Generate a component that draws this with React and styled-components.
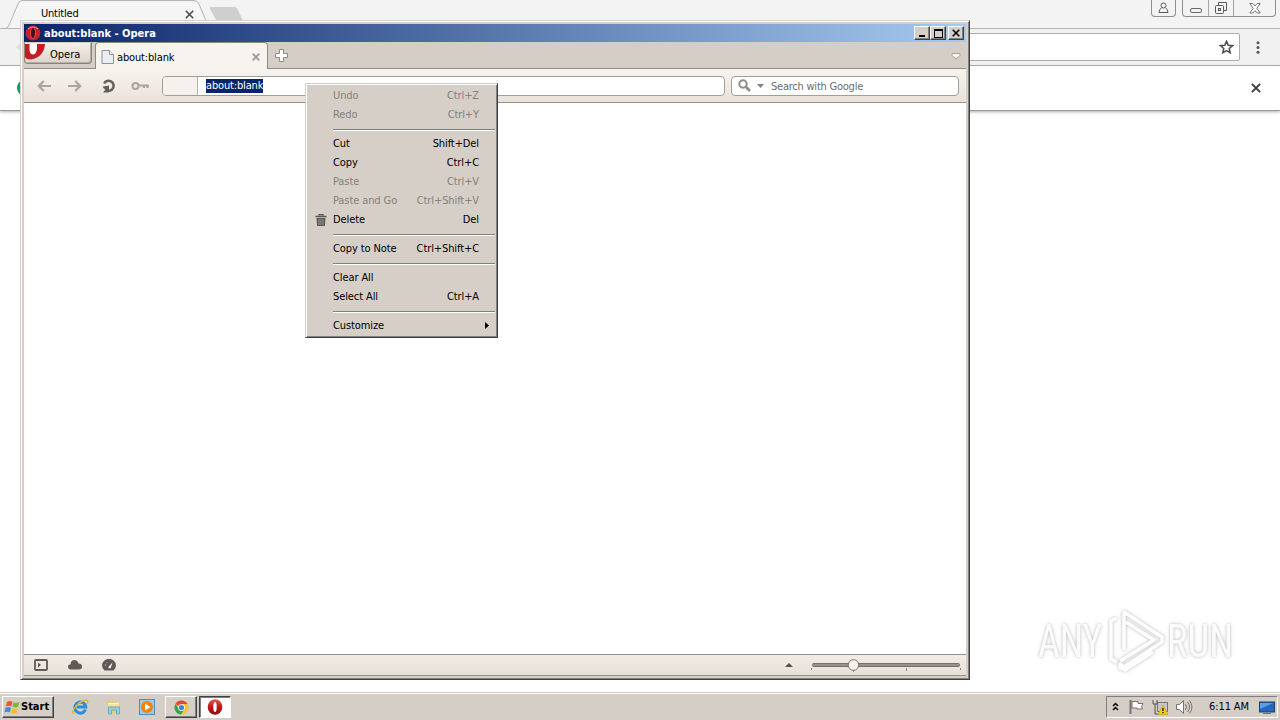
import React from 'react';
import styled, { createGlobalStyle, css } from 'styled-components';

const GlobalStyle = createGlobalStyle`
  * {
    box-sizing: border-box;
  }

  body {
    margin: 0;
    overflow: hidden;
    font-family: 'DejaVu Sans Condensed', 'DejaVu Sans', sans-serif;
    font-stretch: condensed;
    font-size: 11px;
    line-height: 14px;
    color: #000;
  }

  svg {
    display: block;
    flex: none;
  }
`;

const Desktop = styled.div`
  position: relative;
  width: 1280px;
  height: 720px;
  display: flex;
  flex-direction: column;
  overflow: hidden;
  background: #fff;
`;

// Chrome window behind
const ChromeWindow = styled.section`
  flex: 1;
  display: flex;
  flex-direction: column;
  background: #fff;
`;

const ChromeTabStrip = styled.div`
  height: 28px;
  display: flex;
  justify-content: space-between;
  background: #f3f3f3;
`;

const ChromeTabs = styled.div`
  display: grid;
  width: 250px;
  height: 28px;

  > * {
    grid-area: 1 / 1;
  }
`;

const ChromeTabLabel = styled.div`
  display: flex;
  align-items: flex-start;
  justify-content: space-between;
  width: 153px;
  margin: 7px 0 0 41px;
  letter-spacing: -0.2px;

  svg {
    margin-top: 3px;
  }
`;

const ChromeControls = styled.div`
  display: flex;
  gap: 6px;
  padding-right: 4px;
`;

const ChromeControlGroup = styled.div`
  display: flex;
  height: 17px;
  border: 1px solid #8e8e8e;
  border-top: 0;
  border-radius: 0 0 4px 4px;
`;

const ChromeControl = styled.div`
  width: ${props => props.$width}px;
  display: flex;
  justify-content: center;
  align-items: center;

  & + & {
    border-left: 1px solid #a5a5a5;
  }
`;

const ChromeToolbar = styled.div`
  height: 38px;
  display: flex;
  align-items: center;
  border-top: 1px solid #b4b4b4;
  border-bottom: 1px solid #b4b4b4;
  background: #f1f1f1;
`;

const ChromeBack = styled.div`
  width: 80px;
  padding-left: 14px;
`;

const ChromeAddress = styled.div`
  flex: 1;
  height: 28px;
  display: flex;
  align-items: center;
  justify-content: flex-end;
  padding-right: 5px;
  border: 1px solid #adadad;
  border-radius: 2px;
  background: #fff;
`;

const ChromeMenuButton = styled.div`
  width: 40px;
  display: flex;
  justify-content: center;
  padding-right: 4px;
`;

const ChromeInfoBar = styled.div`
  height: 45px;
  display: flex;
  align-items: center;
  justify-content: space-between;
  padding: 0 19px 0 17px;
  border-bottom: 1px solid #999;
  background: #fff;
  box-shadow: 0 1px 3px rgba(0, 0, 0, 0.32);
`;

const GreenDot = styled.div`
  width: 16px;
  height: 16px;
  border-radius: 50%;
  background: #109d62;
`;

// Opera window
const OperaWindow = styled.main`
  position: absolute;
  left: 20px;
  top: 20px;
  width: 950px;
  height: 660px;
  display: flex;
  flex-direction: column;
  padding: 2px 3px 2px 2px;
  border: 1px solid #d8d2ca;
  border-right-color: #404040;
  border-bottom-color: #404040;
  background: #d5cfc7;
  box-shadow: inset 1px 1px #fff, inset -1px -1px #808080;
`;

const TitleBar = styled.header`
  height: 18px;
  flex: none;
  display: flex;
  align-items: center;
  gap: 3px;
  margin: 1px 0 0 1px;
  padding: 0 2px 0 1px;
  background: linear-gradient(90deg, #0a246a, #a6caf0);
  color: #fff;
`;

const Title = styled.span`
  flex: 1;
  padding-top: 1px;
  font-weight: bold;
`;

const raised = css`
  border: 1px solid;
  border-color: #fff #404040 #404040 #fff;
  background: #d5cfc7;
  box-shadow: inset -1px -1px #808080;
`;

const CaptionButtons = styled.div`
  display: flex;
`;

const CaptionButton = styled.div`
  ${raised}
  width: 16px;
  height: 14px;
  display: flex;
  align-items: center;
  justify-content: center;
  margin-left: ${props => (props.$apart ? 2 : 0)}px;
`;

const TabBar = styled.nav`
  height: 27px;
  flex: none;
  display: flex;
  margin-left: 1px;
  border-bottom: 1px solid #918b84;
  background: #d5cec6;
`;

const OperaButton = styled.div`
  width: 68px;
  height: 22px;
  display: flex;
  gap: 5px;
  overflow: hidden;
  border: 1px solid #8b857e;
  border-top-color: #d5cec6;
  border-radius: 0 0 4px 4px;
  background: linear-gradient(#f4f0ec, #dbd4cc);
  box-shadow: inset -1px -1px #b5aea7;

  svg {
    margin-top: 1px;
  }

  span {
    margin-top: 5px;
  }
`;

const PageTab = styled.div`
  width: 173px;
  height: 27px;
  display: flex;
  align-items: center;
  gap: 3px;
  margin: 0 0 -1px 3px;
  padding: 1px 7px 0 5px;
  border: 1px solid #8e8881;
  border-bottom: 0;
  border-radius: 4px 4px 0 0;
  background: #f7f3ee;

  span {
    flex: 1;
    padding-top: 2px;
    letter-spacing: -0.15px;
  }
`;

const NewTab = styled.div`
  flex: 1;
  padding: 7px 0 0 7px;
`;

const ClosedTabs = styled.div`
  padding: 11px 5px 0 0;
`;

const AddressBar = styled.div`
  height: 34px;
  flex: none;
  display: flex;
  align-items: center;
  margin-left: 1px;
  padding: 0 7px 0 13px;
  border-bottom: 1px solid #958f89;
  background: linear-gradient(#f7f3ee, #e9e2da);
`;

const NavButtons = styled.div`
  width: 125px;
  display: grid;
  grid-template-columns: 31px 34px 29px 19px;
  align-items: center;
`;

const UrlField = styled.div`
  width: 563px;
  height: 20px;
  display: flex;
  overflow: hidden;
  border: 1px solid #a39d97;
  border-radius: 4px;
  background: #fff;
`;

const UrlBadge = styled.div`
  width: 35px;
  border-right: 1px solid #b8b2ac;
  background: #f5f1ec;
`;

const Selection = styled.span`
  height: 14px;
  margin: 2px 0 0 8px;
  background: #0a246a;
  color: #fff;
  letter-spacing: -0.16px;
`;

const SearchField = styled.div`
  flex: 1;
  height: 20px;
  display: flex;
  align-items: center;
  gap: 6px;
  margin-left: 6px;
  padding-left: 6px;
  border: 1px solid #a39d97;
  border-radius: 4px;
  background: #fff;
  color: #6d6d6d;
  letter-spacing: -0.23px;

  span {
    padding: 2px 0 0 1px;
  }
`;

const Page = styled.div`
  flex: 1;
  margin-left: 1px;
  background: #fff;
`;

const StatusBar = styled.footer`
  height: 22px;
  flex: none;
  display: flex;
  align-items: center;
  justify-content: space-between;
  margin: 0 0 1px 1px;
  padding: 0 5px 0 10px;
  border-top: 1px solid #958f89;
  border-bottom: 1px solid #958f89;
  background: linear-gradient(#f3ece6, #e7e0d8);
`;

const StatusGroup = styled.div`
  display: flex;
  align-items: center;
  gap: ${props => props.$gap}px;
`;

// Context menu of the address field
const Menu = styled.div`
  position: absolute;
  left: 305px;
  top: 83px;
  width: 193px;
  padding: 2px;
  border: 1px solid #d5cfc7;
  border-right-color: #404040;
  border-bottom-color: #404040;
  background: #d5cfc7;
  box-shadow: inset 1px 1px #fff, inset -1px -1px #808080;
`;

const MenuRow = styled.div`
  height: 19px;
  display: grid;
  grid-template-columns: 25px 1fr auto;
  align-items: center;
  padding-right: ${props => (props.$submenu ? 6 : 16)}px;
  color: ${props => (props.$disabled ? '#85817c' : '#000')};
  letter-spacing: -0.1px;

  svg {
    margin-left: 7px;
  }
`;

const MenuSeparator = styled.hr`
  height: 2px;
  margin: 5px 0 3px 25px;
  border: 0;
  border-top: 1px solid #808080;
  border-bottom: 1px solid #fff;
`;

// Taskbar
const Taskbar = styled.footer`
  height: 28px;
  display: flex;
  align-items: flex-start;
  justify-content: space-between;
  padding: 2px 2px 0;
  border-top: 1px solid #d0ccc5;
  background: #d5cec6;
  box-shadow: inset 0 1px #fff;
`;

const TaskGroup = styled.div`
  display: flex;
  align-items: center;
  margin-top: 1px;
`;

const StartButton = styled.div`
  ${raised}
  width: 52px;
  height: 22px;
  display: flex;
  align-items: center;
  padding-left: 1px;
  font-weight: bold;
`;

const QuickLaunch = styled.div`
  width: 110px;
  display: flex;
  gap: 17px;
  padding-left: 18px;
`;

const TaskButton = styled.div`
  ${raised}
  width: 32px;
  height: 22px;
  display: flex;
  align-items: center;
  justify-content: center;
  margin-left: ${props => (props.$active ? 2 : 1)}px;

  ${props => props.$active && `
    padding-right: 1px;
    border-color: #404040 #fff #fff #404040;
    background: #fff;
    box-shadow: inset 1px 1px #808080;
  `}
`;

const Tray = styled.div`
  width: 172px;
  height: 22px;
  display: flex;
  align-items: center;
  padding-left: 5px;
  border: 1px solid;
  border-color: #808080 #fff #fff #808080;
`;

const Clock = styled.span`
  margin: 0 10px 0 16px;
  letter-spacing: -0.1px;
  white-space: nowrap;
`;

const TrayIcons = styled.div`
  display: flex;
  align-items: center;
  gap: 8px;
`;

const Watermark = styled.div`
  position: absolute;
  left: 1030px;
  top: 600px;

  svg {
    filter: drop-shadow(0 0 1.5px rgba(0, 0, 0, 0.2)) drop-shadow(0 0 2px rgba(0, 0, 0, 0.1));
  }
`;

const WatermarkText = styled.text`
  font-family: 'Roboto', sans-serif;
  font-size: 46px;
  fill: #fbfbfb;
`;

const Cross = ({ size = 8, color = '#444', width = 1.6 }) => (
  <svg width={size} height={size} viewBox="0 0 8 8">
    <path d="M.7.7l6.6 6.6M7.3.7L.7 7.3" stroke={color} strokeWidth={width} />
  </svg>
);

const OperaIcon = ({ size = 16 }) => (
  <svg width={size} height={size} viewBox="0 0 16 16">
    <defs>
      <linearGradient id="operaRed" x1="0" y1="0" x2="0" y2="1">
        <stop offset="0" stopColor="#e5574d" />
        <stop offset=".5" stopColor="#c4151b" />
        <stop offset="1" stopColor="#8e0b10" />
      </linearGradient>
    </defs>
    <ellipse cx="8" cy="8" rx="7.3" ry="7.7" fill="url(#operaRed)" />
    <ellipse cx="8" cy="8" rx="1.7" ry="5" fill="#fff" />
  </svg>
);

const OperaTitleIcon = () => (
  <svg width="16" height="16" viewBox="0 0 16 16">
    <ellipse cx="8" cy="8" rx="7.4" ry="7.6" fill="#cf2026" />
    <path d="M3 4q5-4 10 0" stroke="#ef8b83" fill="none" />
    <ellipse cx="8" cy="8" rx="2.5" ry="5.6" fill="#4a0d20" stroke="#e8695f" strokeWidth=".7" />
  </svg>
);

const Arrow = ({ flip }) => (
  <svg width="14" height="12" viewBox="0 0 14 12">
    <g transform={flip ? 'translate(14 0) scale(-1 1)' : undefined} fill="none" stroke="#aaa49f" strokeWidth="2.2">
      <path d="M2 6h12M6.8 1L1.8 6l5 5" />
    </g>
  </svg>
);

const ReloadIcon = () => (
  <svg width="14" height="14" viewBox="0 0 14 14">
    <path d="M2.2 4.500A5 5 0 1 1 7.500 11.700H5" fill="none" stroke="#625f5c" strokeWidth="2.5" />
    <path d="M7 6.500V13.500H1l2.300-2.800L1 8.500V7.500z" fill="#625f5c" />
  </svg>
);

const KeyIcon = () => (
  <svg width="19" height="10" viewBox="0 0 19 10">
    <circle cx="4.500" cy="5" r="3" fill="none" stroke="#aaa49f" strokeWidth="2" />
    <path d="M7.500 4.500h10.500M13 5v2M16.500 5v2" stroke="#aaa49f" strokeWidth="2.2" />
  </svg>
);

const TrashIcon = () => (
  <svg width="12" height="12" viewBox="0 0 12 12">
    <path d="M4 1.500V.5h4v1M.5 2.500h11" stroke="#5a5754" strokeWidth="1.300" fill="none" />
    <path d="M1.500 4h9l-.6 8H2.100z" fill="#5a5754" />
    <path d="M4 5v6M6 5v6M8 5v6" stroke="#aaa49d" strokeWidth=".8" />
  </svg>
);

const menuItems = [
  { label: 'Undo', keys: 'Ctrl+Z', disabled: true },
  { label: 'Redo', keys: 'Ctrl+Y', disabled: true },
  null,
  { label: 'Cut', keys: 'Shift+Del' },
  { label: 'Copy', keys: 'Ctrl+C' },
  { label: 'Paste', keys: 'Ctrl+V', disabled: true },
  { label: 'Paste and Go', keys: 'Ctrl+Shift+V', disabled: true },
  { label: 'Delete', keys: 'Del', icon: <TrashIcon /> },
  null,
  { label: 'Copy to Note', keys: 'Ctrl+Shift+C' },
  null,
  { label: 'Clear All' },
  { label: 'Select All', keys: 'Ctrl+A' },
  null,
  { label: 'Customize', submenu: true },
];

const ContextMenu = () => (
  <Menu>
    {menuItems.map((item, i) => item ? (
      <MenuRow key={i} $disabled={item.disabled} $submenu={item.submenu}>
        <div>{item.icon}</div>
        <span>{item.label}</span>
        {item.submenu ? (
          <svg width="4" height="7" viewBox="0 0 4 7"><path d="M0 0l4 3.500L0 7z" /></svg>
        ) : (
          <span>{item.keys}</span>
        )}
      </MenuRow>
    ) : (
      <MenuSeparator key={i} />
    ))}
  </Menu>
);

const ChromeBackground = () => (
  <ChromeWindow>
    <ChromeTabStrip>
      <ChromeTabs>
        <svg width="250" height="28" viewBox="0 0 250 28">
          <path d="M0 28.500H5Q8 28 9 25L18 4Q19.500 .5 22 .5H194Q197 .5 199 4L209 28" fill="#f5f5f5" stroke="#b4b4b4" />
          <path d="M211 7h23q3 0 4 3l5 11H219q-3 0-4-3l-5-9q-1-2 1-2z" fill="#cfcfcf" />
        </svg>
        <ChromeTabLabel>
          <span>Untitled</span>
          <Cross size={9} color="#4b4b4b" width={1.4} />
        </ChromeTabLabel>
      </ChromeTabs>
      <ChromeControls>
        <ChromeControlGroup>
          <ChromeControl $width={23}>
            <svg width="11" height="12" viewBox="0 0 11 12" fill="none" stroke="#5a5a5a">
              <circle cx="5.500" cy="3.500" r="2.500" />
              <path d="M3.500 6Q1 7 1 10.500h9Q10 7 7.500 6" />
            </svg>
          </ChromeControl>
        </ChromeControlGroup>
        <ChromeControlGroup>
          <ChromeControl $width={25}>
            <svg width="12" height="14" viewBox="0 0 12 14" fill="none" stroke="#666">
              <rect x=".5" y="7.500" width="11" height="4" rx="1.500" />
            </svg>
          </ChromeControl>
          <ChromeControl $width={25}>
            <svg width="14" height="14" viewBox="0 0 14 14" fill="none" stroke="#5a5a5a">
              <path d="M4.500 4V1.500h8v8H10" />
              <rect x="1.500" y="4.500" width="8" height="8" rx="1" />
              <rect x="4.500" y="7.500" width="2" height="2" />
            </svg>
          </ChromeControl>
          <ChromeControl $width={42}>
            <svg width="12" height="11" viewBox="0 0 12 11">
              <path d="M.8.500h3L6 3 8.200.5h3L7.800 5.300l3.400 4.700h-3L6 7.600 3.800 10h-3l3.400-4.700z" fill="#fff" stroke="#666" strokeWidth=".9" />
            </svg>
          </ChromeControl>
        </ChromeControlGroup>
      </ChromeControls>
    </ChromeTabStrip>
    <ChromeToolbar>
      <ChromeBack>
        <svg width="10" height="16" viewBox="0 0 10 16"><path d="M9 2v12L2 8z" fill="#dedede" /></svg>
      </ChromeBack>
      <ChromeAddress>
        <svg width="15" height="14" viewBox="0 0 15 14">
          <path d="M7.500 1.300l1.700 4 4.300.4-3.300 2.800 1 4.200-3.700-2.200-3.700 2.200 1-4.200L1.500 5.700l4.300-.4z" fill="none" stroke="#4c4c4c" strokeWidth="1.500" />
        </svg>
      </ChromeAddress>
      <ChromeMenuButton>
        <svg width="4" height="13" viewBox="0 0 4 13" fill="#555">
          <circle cx="2" cy="1.700" r="1.500" />
          <circle cx="2" cy="6.500" r="1.500" />
          <circle cx="2" cy="11.300" r="1.500" />
        </svg>
      </ChromeMenuButton>
    </ChromeToolbar>
    <ChromeInfoBar>
      <GreenDot />
      <Cross size={10} color="#404040" width={1.6} />
    </ChromeInfoBar>
  </ChromeWindow>
);

const Opera = () => (
  <OperaWindow>
    <TitleBar>
      <OperaTitleIcon />
      <Title>about:blank - Opera</Title>
      <CaptionButtons>
        <CaptionButton>
          <svg width="8" height="8" viewBox="0 0 8 8"><path d="M1 6h6v2H1z" /></svg>
        </CaptionButton>
        <CaptionButton>
          <svg width="9" height="9" viewBox="0 0 9 9"><path d="M0 0h9v9H0zM1 2v6h7V2z" fillRule="evenodd" /></svg>
        </CaptionButton>
        <CaptionButton $apart>
          <Cross size={8} color="#000" width={1.6} />
        </CaptionButton>
      </CaptionButtons>
    </TitleBar>
    <TabBar>
      <OperaButton>
        <svg width="20" height="17" viewBox="0 0 20 17">
          <path d="M0 0H20Q19 13 6 15.500Q1 15.500 0 13z" fill="#c81a20" />
          <path d="M4.500 0V6Q5 10.500 8 10.500T12 5V0z" fill="#fff" />
        </svg>
        <span>Opera</span>
      </OperaButton>
      <PageTab>
        <svg width="13" height="14" viewBox="0 0 13 14">
          <path d="M1 .5h7.500l4 4v9H1z" fill="#e9eef3" stroke="#8b9299" />
          <path d="M8.500.5v4h4" fill="#fff" stroke="#8b9299" />
        </svg>
        <span>about:blank</span>
        <Cross size={8} color="#9c9690" width={1.7} />
      </PageTab>
      <NewTab>
        <svg width="13" height="13" viewBox="0 0 13 13">
          <path d="M4.500.5h4v4h4v4h-4v4h-4v-4h-4v-4h4z" fill="#fff" stroke="#918b84" />
        </svg>
      </NewTab>
      <ClosedTabs>
        <svg width="10" height="7" viewBox="0 0 10 7">
          <path d="M1 .5h8v2L5 6 1 2.500z" fill="#f7f3ee" stroke="#aaa39c" />
        </svg>
      </ClosedTabs>
    </TabBar>
    <AddressBar>
      <NavButtons>
        <Arrow />
        <Arrow flip />
        <ReloadIcon />
        <KeyIcon />
      </NavButtons>
      <UrlField>
        <UrlBadge />
        <Selection>about:blank</Selection>
      </UrlField>
      <SearchField>
        <svg width="13" height="13" viewBox="0 0 13 13" fill="none" stroke="#8e8b88">
          <circle cx="5" cy="5" r="3.700" strokeWidth="2" />
          <path d="M8 8l4 4" strokeWidth="2.500" />
        </svg>
        <svg width="7" height="4" viewBox="0 0 7 4"><path d="M0 0h7L3.500 4z" fill="#85817e" /></svg>
        <span>Search with Google</span>
      </SearchField>
    </AddressBar>
    <Page />
    <StatusBar>
      <StatusGroup $gap={20}>
        <svg width="14" height="12" viewBox="0 0 14 12">
          <rect x="1" y="1" width="12" height="10" rx="1" fill="none" stroke="#5e5a57" strokeWidth="1.800" />
          <path d="M4 3.500L7 6 4 8.500z" fill="#5e5a57" />
        </svg>
        <svg width="14" height="12" viewBox="0 0 14 12">
          <path d="M3 10.500Q0 10.500 0 7.800 0 5.500 2.500 5.200 3 1 6.500 1q3 0 4 3.500Q14 4.500 14 7.500q0 3-3 3z" fill="#5e5a57" />
        </svg>
        <svg width="14" height="12" viewBox="0 0 14 12">
          <path d="M2.500 11.500A7 6.600 0 1 1 11.500 11.500z" fill="#5e5a57" />
          <path d="M6 8.500l4.500-5-2 6z" fill="#fff" />
          <path d="M3 6h1M5 3.500l.5.5" stroke="#ddd6cf" />
        </svg>
      </StatusGroup>
      <StatusGroup $gap={18}>
        <svg width="8" height="4" viewBox="0 0 8 4"><path d="M4 0l4 4H0z" fill="#55514e" /></svg>
        <svg width="150" height="16" viewBox="0 0 150 16">
          <rect x="1.500" y="6.500" width="147" height="3" rx="1" fill="#96918c" stroke="#75706b" />
          <path d="M.5 11v2M42.500 12v3M95.500 11v3M149.500 11v2" stroke="#8b8580" />
          <circle cx="42.500" cy="8" r="5.300" fill="#f5f2ee" stroke="#77716c" />
        </svg>
      </StatusGroup>
    </StatusBar>
  </OperaWindow>
);

const TaskbarIcons = () => (
  <QuickLaunch>
    <svg width="17" height="16" viewBox="0 0 17 16">
      <path d="M13.500 10.500A5.500 5.500 0 1 1 13.800 8H5" fill="none" stroke="#2a8fd8" strokeWidth="3" />
      <path d="M2 14Q-1 15 2 10 7 2 14 1q3 0 1 4" fill="none" stroke="#e3b72f" strokeWidth="1.400" />
    </svg>
    <svg width="16" height="16" viewBox="0 0 16 16">
      <path d="M1 2h6l1 1.500h6V14H1z" fill="#e9cd6d" />
      <path d="M2 4.500h11M2 6h11" stroke="#fff6cf" />
      <path d="M2.500 15V8h11v7h-3v-4h-5v4z" fill="#8ed0ee" stroke="#4ba5c9" strokeWidth=".7" />
    </svg>
    <svg width="16" height="16" viewBox="0 0 16 16">
      <rect x=".5" y=".5" width="15" height="15" fill="#9dcaea" stroke="#4d8fc5" />
      <circle cx="8" cy="8" r="6" fill="#ee8413" />
      <path d="M6 4.500l5.500 3.500L6 11.500z" fill="#fff" />
    </svg>
  </QuickLaunch>
);

const App = () => (
  <>
    <GlobalStyle />
    <Desktop>
      <ChromeBackground />
      <Opera />
      <ContextMenu />
      <Watermark>
        <svg width="240" height="84" viewBox="0 0 240 84">
          <WatermarkText transform="translate(8 57) scale(.82 1)">ANY</WatermarkText>
          <g fill="none" stroke="#fdfdfd" strokeWidth="3.500" strokeLinejoin="round">
            <path d="M87 18l-6 3v38l6 3" />
            <path d="M94 50V12l38 25v5L94 67l-4-3v4l5 2 28-18" />
            <path d="M96 22l28 18-34 21" />
          </g>
          <WatermarkText transform="translate(137 57) scale(.84 1)">RUN</WatermarkText>
        </svg>
      </Watermark>
      <Taskbar>
        <TaskGroup>
          <StartButton>
            <svg width="17" height="16" viewBox="0 0 17 16">
              <path d="M3 3q3-2 5.500-.2L7.300 7.500Q5 6 1.800 7.500z" fill="#e65a28" />
              <path d="M9.500 3.200Q12 4.500 15.500 3l-1.300 4.700q-3 1.500-5.700 0z" fill="#7db83a" />
              <path d="M1.500 8.700q3-1.500 5.500 0l-1.200 4.800q-2.500-1.500-5.500 0z" fill="#3f8edc" />
              <path d="M8.200 9q3 1.500 5.700 0l-1.200 4.700q-3 1.500-5.700 0z" fill="#f5bf2b" />
            </svg>
            <span>Start</span>
          </StartButton>
          <TaskbarIcons />
          <TaskButton>
            <svg width="15" height="15" viewBox="0 0 16 16">
              <circle cx="8" cy="8" r="7.500" fill="#f2c62e" />
              <path d="M8 8L1.500 4.200A7.500 7.500 0 0 1 14.500 4.300H8z" fill="#df4738" />
              <path d="M1.500 4.200A7.500 7.500 0 0 0 7.500 15.500L11 9.500 5 9z" fill="#35a354" />
              <circle cx="8" cy="8" r="3.600" fill="#fff" />
              <circle cx="8" cy="8" r="2.800" fill="#4482d9" />
            </svg>
          </TaskButton>
          <TaskButton $active>
            <OperaIcon />
          </TaskButton>
        </TaskGroup>
        <TaskGroup>
          <Tray>
            <TrayIcons>
              <svg width="8" height="10" viewBox="0 0 8 10">
                <path d="M1 4l2.500-2.500L6 4M1 8l2.500-2.500L6 8" fill="none" stroke="#000" strokeWidth="1.500" />
              </svg>
              <svg width="16" height="16" viewBox="0 0 16 16">
                <path d="M2.500 1v14" stroke="#77736f" strokeWidth="2" />
                <path d="M4 2.500h6v2h5l-1.500 3 1 2.500H9V9H4z" fill="#fff" stroke="#77736f" />
              </svg>
              <svg width="16" height="16" viewBox="0 0 16 16">
                <rect x="5.500" y="3.500" width="10" height="9" fill="#c5c9cc" stroke="#77736f" />
                <path d="M1 1v4h4V1M3 5v10h3" stroke="#55514e" fill="none" />
                <path d="M11 6l5 9.500H6z" fill="#f4ce19" stroke="#c39c05" strokeWidth=".6" />
                <path d="M11 9v3M11 13v1.200" stroke="#000" strokeWidth="1.200" />
              </svg>
              <svg width="17" height="16" viewBox="0 0 17 16" fill="none" stroke="#77736f">
                <path d="M.5 5.500h3l4-4v13l-4-4h-3z" fill="#fff" />
                <path d="M9.500 5q2 3 0 6M11.500 3q4 5 0 10M13.500 1.500q5 6.500 0 13" />
              </svg>
            </TrayIcons>
            <Clock>6:11 AM</Clock>
            <svg width="16" height="15" viewBox="0 0 16 15">
              <rect x=".5" y="2" width="15" height="10" fill="#2468bd" stroke="#173f78" />
              <path d="M1 3h13L1 9z" fill="#5da0e2" />
              <path d="M4 13.500h8" stroke="#67727d" />
            </svg>
          </Tray>
        </TaskGroup>
      </Taskbar>
    </Desktop>
  </>
);

export default App;
